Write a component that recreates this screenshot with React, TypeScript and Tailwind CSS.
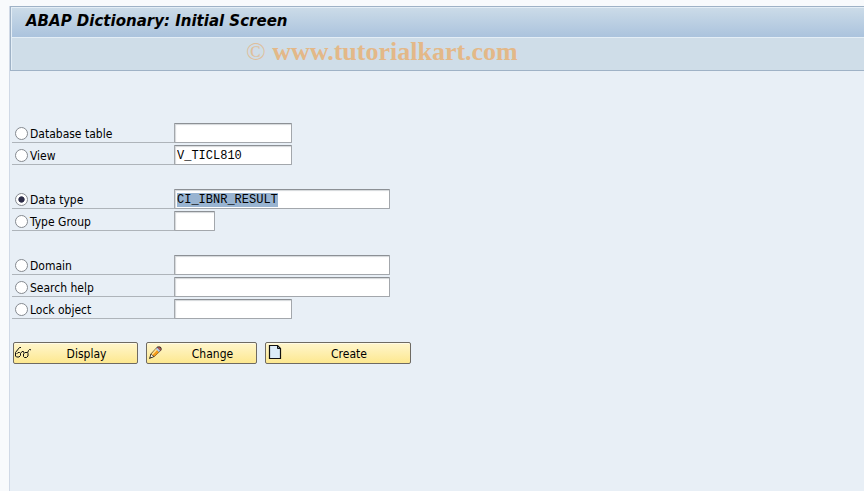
import React, { useEffect, useRef, useState } from 'react';

interface ObjectField {
  id: string;
  label: string;
  width: string;
  value?: string;
}

const groups: ObjectField[][] = [
  [
    { id: 'table', label: 'Database table', width: 'w-[118px]' },
    { id: 'view', label: 'View', width: 'w-[118px]', value: 'V_TICL810' },
  ],
  [
    { id: 'dtype', label: 'Data type', width: 'w-[216px]', value: 'CI_IBNR_RESULT' },
    { id: 'tgroup', label: 'Type Group', width: 'w-[41px]' },
  ],
  [
    { id: 'domain', label: 'Domain', width: 'w-[216px]' },
    { id: 'shelp', label: 'Search help', width: 'w-[216px]' },
    { id: 'lock', label: 'Lock object', width: 'w-[118px]' },
  ],
];

const GlassesIcon = () => (
  <svg className="w-4 h-4 shrink-0" viewBox="0 0 16 16" fill="none" stroke="#111" strokeWidth="1">
    <path d="M6 2.500h-1.500l-4 5v3.500l1 1h2.500l1.500-1.500v-2l-1-1h-1.500l-1.500 1.500" />
    <path d="M5.500 8.500l1.500-2h1.500l.5 1.500" />
    <path d="M10 7.500h2l1 1v2.500l-1.500 1.500h-2l-1-1v-2.500z" />
    <path d="M12.500 8l1-2.500 1-1h1l.5 1" />
  </svg>
);

const PencilIcon = () => (
  <svg className="w-4 h-4 shrink-0" viewBox="0 0 16 16">
    <path d="M1 14l1.500-5L9.500 1.500h2.500l1.500 1.500v2L6 12z" fill="#111" />
    <path d="M3.300 8.900l4.700-5.100 3.200 3.200-5 4.600z" fill="#f59a1a" />
    <path d="M3.300 8.900l4.700-5.100 1.300 1.300-4.800 4.900z" fill="#ffe08c" />
    <path d="M7.800 4l1.400-1.400 3.100 3.100L10.900 7.100z" fill="#b9d3f2" />
    <path d="M9.200 2.800l.6-.6h1.900l1.100 1.100v1.900l-.6.6z" fill="#b8605c" />
    <path d="M2.300 12.400l.8-3 2.500 2.200z" fill="#fff3dd" />
  </svg>
);

const PageIcon = () => (
  <svg className="w-4 h-4 shrink-0" viewBox="0 0 16 16">
    <path d="M2.500 .5h8l3 3v10h-11z" fill="#dcecf8" stroke="#111" strokeWidth="1.200" />
    <path d="M10.500 .5v3h3z" fill="#7f929e" stroke="#111" />
  </svg>
);

const actions = [
  { label: 'Display', width: 'w-[125px]', icon: <GlassesIcon /> },
  { label: 'Change', width: 'w-[111px]', icon: <PencilIcon /> },
  { label: 'Create', width: 'w-[146px]', icon: <PageIcon /> },
];

const App: React.FC = () => {
  const [selected, setSelected] = useState('dtype');
  const activeInput = useRef<HTMLInputElement>(null);

  useEffect(() => {
    activeInput.current?.focus();
    activeInput.current?.select();
  }, []);

  return (
    <div className="min-h-screen bg-[#f8fafc] pl-[9px] pt-1.5 flex flex-col font-['DejaVu_Sans_Condensed','DejaVu_Sans',sans-serif] text-[12px] text-black">
      <div className="grow border-l border-[#d0d9e6] bg-[#e8eff6]">
        <header className="border border-r-0 border-[#9fb2c6] bg-[#cfdde8]">
          <h1 className="h-[31px] pl-3.5 border-l border-t border-b border-[#e4eef6] bg-linear-to-b from-[#cbdbe8] to-[#abc3dd] font-['DejaVu_Sans',sans-serif] text-[15px] leading-[26px] font-bold italic">
            ABAP Dictionary: Initial Screen
          </h1>
          <div className="h-8 pl-[234px] border-l border-[#e4eef6] font-['Liberation_Serif',serif] text-[26px] leading-[28px] text-[#e3b888] whitespace-nowrap">
            <span className="opacity-80">©</span> <span className="font-bold">www.tutorialkart.com</span>
          </div>
        </header>

        <main className="pl-0.5 pt-[52px]">
          <div className="flex flex-col gap-6">
            {groups.map((fields, index) => (
              <div key={index} className="flex flex-col gap-0.5">
                {fields.map((field) => (
                  <div key={field.id} className="flex h-5">
                    <label className="w-[162px] pl-[3px] pt-0.5 flex items-center gap-0.5 border-b border-[#aeb4ba]">
                      <input
                        type="radio"
                        name="object"
                        checked={selected === field.id}
                        onChange={() => setSelected(field.id)}
                        className="appearance-none w-[13px] h-[13px] rounded-full border border-[#858a90] bg-white checked:bg-radial checked:from-[#2d2d48] checked:from-35% checked:to-white checked:to-45%"
                      />
                      <span>{field.label}</span>
                    </label>
                    <input
                      type="text"
                      aria-label={field.label}
                      ref={field.id === 'dtype' ? activeInput : undefined}
                      defaultValue={field.value}
                      className={`${field.width} h-5 px-0.5 pt-0.5 bg-white rounded-[1px] border border-[#a3a7ac] border-t-[#8c9095] shadow-[inset_1px_1px_1px_#d4d7da] font-['Liberation_Mono',monospace] text-[12px] outline-none selection:bg-[#99b4d1] selection:text-black`}
                    />
                  </div>
                ))}
              </div>
            ))}
          </div>

          <div className="flex gap-2 pl-px pt-[23px]">
            {actions.map((action) => (
              <button
                key={action.label}
                type="button"
                className={`${action.width} h-[22px] px-px flex items-center rounded-xs border border-[#6e6a62] bg-linear-to-b from-[#fff6cc] to-[#fde88f] shadow-[inset_0_1px_0_#fffbe6]`}
              >
                {action.icon}
                <span className="grow pl-1.5 pt-0.5 text-center">{action.label}</span>
              </button>
            ))}
          </div>
        </main>
      </div>
    </div>
  );
};

export default App;
